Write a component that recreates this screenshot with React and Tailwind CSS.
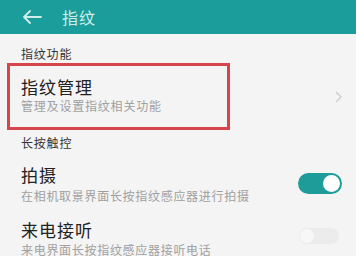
import React from "react";

function Toggle({ on }) {
  return on ? (
    <div className="w-[44px] h-[21px] rounded-full bg-[#1e9c9a] flex items-center justify-end pr-[2px]">
      <div className="w-[17px] h-[17px] rounded-full bg-white" />
    </div>
  ) : (
    <div className="w-[40px] h-[16px] rounded-full bg-[#ececec] flex items-center justify-start pl-[1px]">
      <div className="w-[14px] h-[14px] rounded-full bg-[#f7f7f7]" />
    </div>
  );
}

export default function App() {
  return (
    <div
      className="w-[356px] h-[256px] overflow-hidden bg-[#f4f4f4] flex flex-col"
      style={{ fontFamily: '"Noto Sans CJK SC", "Noto Sans", sans-serif' }}
    >
      <div className="h-[34px] shrink-0 bg-[#1b9d9b] flex items-center pl-[22px]">
        <svg width="20" height="14" viewBox="0 0 20 14" fill="none" stroke="#cdeee9" strokeWidth="1.8" strokeLinecap="round" strokeLinejoin="round">
          <path d="M19 7H2M8 1L2 7l6 6" />
        </svg>
        <span className="ml-[20px] text-[16px] leading-[16px] tracking-[1px] text-[#cdeee9]">指纹</span>
      </div>

      <div className="h-[29px] shrink-0 pt-[14px] pl-[21px] text-[12px] leading-[12px] tracking-[0.8px] text-[#333]">指纹功能</div>

      <div className="relative h-[66px] shrink-0 pt-[15px] pl-[21px]">
        <div className="text-[17px] leading-[17px] tracking-[1px] text-[#222]">指纹管理</div>
        <div className="mt-[5px] text-[12px] leading-[12px] tracking-[0.8px] text-[#a0a0a0]">管理及设置指纹相关功能</div>
        <div className="absolute left-[7px] top-0 w-[223px] h-[67px] border-[3px] border-[#d6454b]" />
        <svg className="absolute left-[334px] top-[28px]" width="8" height="12" viewBox="0 0 8 12" fill="none" stroke="#cfcfcf" strokeWidth="1.5">
          <path d="M2 1l5 5-5 5" />
        </svg>
      </div>

      <div className="h-[26px] shrink-0 pt-[8px] pl-[21px] text-[12px] leading-[12px] tracking-[0.8px] text-[#333]">长按触控</div>

      <div className="h-[48px] shrink-0 pt-[11px] pl-[21px] pr-[14px] flex items-start justify-between">
        <div>
          <div className="text-[17px] leading-[17px] tracking-[1px] text-[#222]">拍摄</div>
          <div className="mt-[7px] text-[12px] leading-[12px] tracking-[0.7px] text-[#a0a0a0]">在相机取景界面长按指纹感应器进行拍摄</div>
        </div>
        <div className="mt-[7px]">
          <Toggle on />
        </div>
      </div>

      <div className="pt-[18px] pl-[21px] pr-[17px] flex items-start justify-between">
        <div>
          <div className="text-[17px] leading-[17px] tracking-[1px] text-[#222]">来电接听</div>
          <div className="mt-[6px] text-[12px] leading-[12px] tracking-[0.7px] text-[#a0a0a0]">来电界面长按指纹感应器接听电话</div>
        </div>
        <div className="mt-[7px]">
          <Toggle on={false} />
        </div>
      </div>
    </div>
  );
}
